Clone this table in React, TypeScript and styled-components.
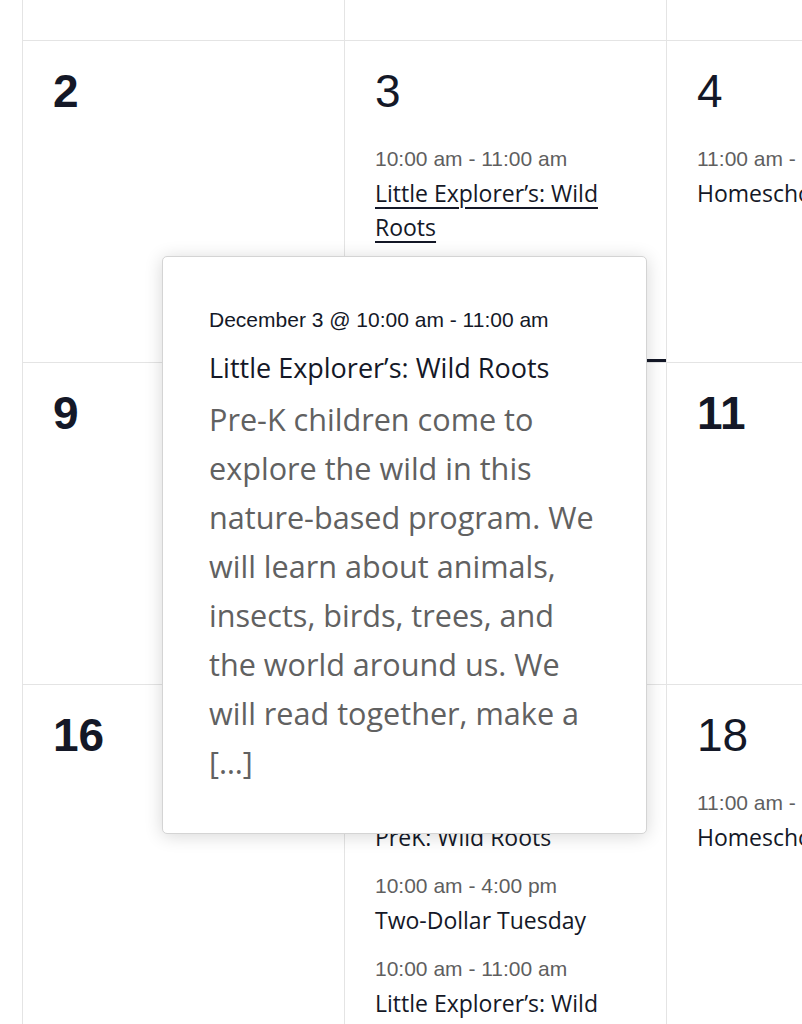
import React from "react";
import styled, { createGlobalStyle, css } from "styled-components";

const GlobalStyle = createGlobalStyle`
  html, body {
    margin: 0;
    padding: 0;
    background: #ffffff;
  }
  body {
    overflow: hidden;
    font-family: "Open Sans", "Liberation Sans", sans-serif;
  }
`;

const Viewport = styled.div`
  position: relative;
  width: 802px;
  height: 1024px;
  overflow: hidden;
  background: #ffffff;
`;

const MonthGrid = styled.div`
  display: grid;
  grid-template-columns: repeat(3, 322px);
  grid-auto-rows: minmax(322px, auto);
  width: max-content;
  margin: -282px 0 0 22px;
  border-left: 1px solid #e4e4e4;
  border-top: 1px solid #e4e4e4;
`;

const DayCell = styled.div<{ $hovered?: boolean }>`
  position: relative;
  box-sizing: border-box;
  padding: 27px 30px 30px;
  border-right: 1px solid #e4e4e4;
  border-bottom: 1px solid #e4e4e4;
  ${(p) =>
    p.$hovered &&
    css`
      &::after {
        content: "";
        position: absolute;
        left: 0;
        right: 0;
        bottom: 0;
        height: 3px;
        background: #141827;
      }
    `}
`;

const DayNumber = styled.div<{ $bold?: boolean }>`
  font-family: "Liberation Sans", Arial, sans-serif;
  font-size: 46px;
  line-height: 46px;
  font-weight: ${(p) => (p.$bold ? 700 : 400)};
  color: #141827;
`;

const EventList = styled.div`
  display: flex;
  flex-direction: column;
  gap: 15px;
  margin-top: 28px;
`;

const EventItem = styled.div`
  display: flex;
  flex-direction: column;
`;

const EventTime = styled.div`
  font-family: "Liberation Sans", Arial, sans-serif;
  font-size: 21px;
  line-height: 34px;
  color: #5f5f5f;
  white-space: nowrap;
`;

const EventTitle = styled.a<{ $active?: boolean }>`
  font-family: "Open Sans", sans-serif;
  font-size: 23px;
  line-height: 34px;
  color: #141827;
  text-decoration: none;
  ${(p) =>
    p.$active &&
    css`
      text-decoration: underline;
      text-decoration-thickness: 2px;
      text-underline-offset: 5px;
      text-decoration-color: #141827;
    `}
`;

const Tooltip = styled.div`
  position: absolute;
  top: 256px;
  left: 162px;
  width: 485px;
  box-sizing: border-box;
  padding: 48px 46px 46px;
  background: #ffffff;
  border: 1px solid #d4d4d4;
  border-radius: 5px;
  box-shadow: 0 2px 18px rgba(0, 0, 0, 0.16);
`;

const TooltipDate = styled.div`
  font-family: "Liberation Sans", Arial, sans-serif;
  font-size: 21px;
  line-height: 30px;
  color: #141827;
  margin-bottom: 13px;
`;

const TooltipTitle = styled.div`
  font-family: "Open Sans", sans-serif;
  font-size: 27px;
  line-height: 39px;
  color: #141827;
  margin-bottom: 8px;
`;

const TooltipText = styled.p`
  margin: 0;
  font-family: "Open Sans", sans-serif;
  font-size: 30.6px;
  line-height: 49px;
  color: #616161;
`;

type CalEvent = { time: string; title: string; active?: boolean };
type Day = { day: number; events: CalEvent[]; hovered?: boolean };

const explorers = "Little Explorer\u2019s: Wild Roots";

const weeks: Day[][] = [
  [
    { day: 25, events: [] },
    { day: 26, events: [] },
    { day: 27, events: [] },
  ],
  [
    { day: 2, events: [] },
    {
      day: 3,
      hovered: true,
      events: [{ time: "10:00 am - 11:00 am", title: explorers, active: true }],
    },
    {
      day: 4,
      events: [{ time: "11:00 am - 12:00 pm", title: "Homeschool Hangout" }],
    },
  ],
  [
    { day: 9, events: [] },
    {
      day: 10,
      events: [
        { time: "9:30 am - 10:30 am", title: "PreK: Wild Roots" },
        { time: "10:00 am - 4:00 pm", title: "Two-Dollar Tuesday" },
      ],
    },
    { day: 11, events: [] },
  ],
  [
    { day: 16, events: [] },
    {
      day: 17,
      events: [
        { time: "9:30 am - 10:30 am", title: "PreK: Wild Roots" },
        { time: "10:00 am - 4:00 pm", title: "Two-Dollar Tuesday" },
        { time: "10:00 am - 11:00 am", title: explorers },
      ],
    },
    {
      day: 18,
      events: [{ time: "11:00 am - 12:00 pm", title: "Homeschool Hangout" }],
    },
  ],
];

export default function App() {
  return (
    <>
      <GlobalStyle />
      <Viewport>
        <MonthGrid>
          {weeks.flat().map((d, i) => (
            <DayCell key={i} $hovered={d.hovered}>
              <DayNumber $bold={d.events.length === 0}>{d.day}</DayNumber>
              {d.events.length > 0 && (
                <EventList>
                  {d.events.map((e, j) => (
                    <EventItem key={j}>
                      <EventTime>{e.time}</EventTime>
                      <div>
                        <EventTitle href="#" $active={e.active}>
                          {e.title}
                        </EventTitle>
                      </div>
                    </EventItem>
                  ))}
                </EventList>
              )}
            </DayCell>
          ))}
        </MonthGrid>
        <Tooltip>
          <TooltipDate>December 3 @ 10:00 am - 11:00 am</TooltipDate>
          <TooltipTitle>{explorers}</TooltipTitle>
          <TooltipText>
            Pre-K children come to explore the wild in this nature-based
            program. We will learn about animals, insects, birds, trees, and
            the world around us. We will read together, make a [&hellip;]
          </TooltipText>
        </Tooltip>
      </Viewport>
    </>
  );
}
